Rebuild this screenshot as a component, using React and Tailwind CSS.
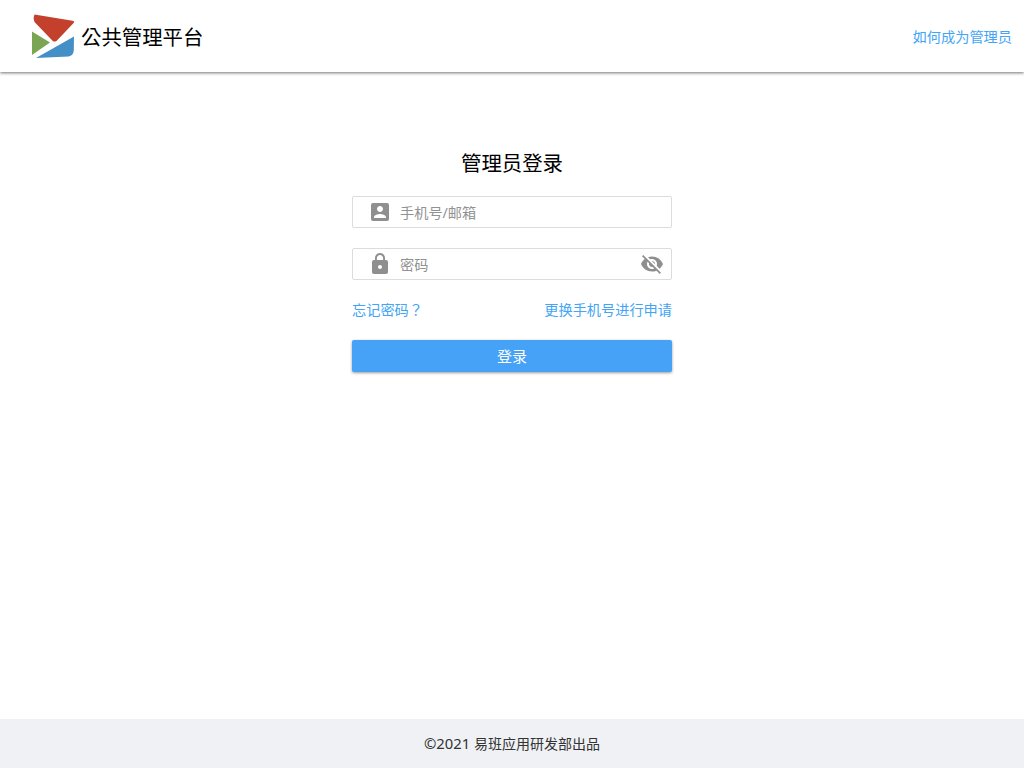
import React from 'react';

function Logo() {
  return (
    <svg width="44" height="46" viewBox="0 0 44 46" className="shrink-0">
      <path d="M3.500 1.800 Q4 1.500 5 1.700 L41.500 7.800 Q43.800 8.400 42.600 10 L25.500 28 Q23.500 29.200 21.800 28 L3.500 9 Q1.800 5 3.500 1.800 Z" fill="#c2402c" />
      <path d="M1 18.500 L19 29.500 L1 42 Z" fill="#7aa653" />
      <path d="M43 23.500 L42.800 37 Q42.500 42.800 37.500 43.400 L5 45 Z" fill="#448fc6" />
    </svg>
  );
}

function UserBox() {
  return (
    <svg width="24" height="24" viewBox="0 0 24 24" fill="#8f8f8f">
      <path d="M3 5v14a2 2 0 0 0 2 2h14a2 2 0 0 0 2-2V5a2 2 0 0 0-2-2H5a2 2 0 0 0-2 2zm12 4c0 1.66-1.34 3-3 3s-3-1.34-3-3 1.34-3 3-3 3 1.34 3 3zm-9 8c0-2 4-3.1 6-3.1s6 1.1 6 3.1v1H6v-1z" />
    </svg>
  );
}

function Lock() {
  return (
    <svg width="24" height="24" viewBox="0 0 24 24" fill="#8f8f8f">
      <path d="M18 8h-1V6c0-2.76-2.24-5-5-5S7 3.24 7 6v2H6c-1.1 0-2 .9-2 2v10c0 1.1.9 2 2 2h12c1.1 0 2-.9 2-2V10c0-1.1-.9-2-2-2zm-6 9c-1.1 0-2-.9-2-2s.9-2 2-2 2 .9 2 2-.9 2-2 2zm3.1-9H8.900V6c0-1.710 1.390-3.100 3.100-3.100s3.100 1.390 3.100 3.100v2z" />
    </svg>
  );
}

function EyeOff() {
  return (
    <svg width="24" height="24" viewBox="0 0 24 24" fill="#8f8f8f">
      <path d="M12 7c2.760 0 5 2.240 5 5 0 .65-.13 1.260-.36 1.830l2.920 2.920c1.510-1.260 2.700-2.890 3.430-4.750-1.730-4.390-6-7.500-11-7.500-1.400 0-2.740.25-3.980.7l2.160 2.160C10.740 7.130 11.350 7 12 7zM2 4.270l2.280 2.280.46.46C3.080 8.300 1.780 10.020 1 12c1.730 4.390 6 7.500 11 7.500 1.550 0 3.030-.3 4.380-.84l.42.42L19.730 22 21 20.730 3.270 3 2 4.270zM7.530 9.800l1.550 1.550c-.05.21-.08.430-.08.650 0 1.660 1.340 3 3 3 .22 0 .44-.03.650-.08l1.550 1.550c-.67.330-1.410.53-2.200.53-2.760 0-5-2.240-5-5 0-.79.200-1.530.530-2.200zm4.310-.78l3.150 3.150.02-.16c0-1.660-1.340-3-3-3l-.17.010z" />
    </svg>
  );
}

export default function App() {
  return (
    <div className="flex flex-col h-[768px] bg-white font-['Noto_Sans','Noto_Sans_CJK_TC',sans-serif] text-[14.2px]">
      <header className="flex items-center justify-between h-[72px] pl-[31px] pr-3 bg-white shadow-[0_1px_3px_rgba(0,0,0,0.55)]">
        <div className="flex items-center">
          <Logo />
          <span className="ml-[6px] pt-[2px] text-[20.4px] text-black">公共管理平台</span>
        </div>
        <a className="pt-[2px] text-[#42a5f5]">如何成为管理员</a>
      </header>

      <main className="flex-1 flex flex-col items-center pt-[76px]">
        <div className="w-[320px]">
          <h1 className="h-[30px] leading-[30px] text-center text-[20.4px] text-black">管理员登录</h1>
          <div className="flex items-center h-8 mt-[18px] pl-[15px] border border-[#dcdcdc] rounded-[2px]">
            <UserBox />
            <span className="ml-2 pt-[2px] text-[#929292]">手机号/邮箱</span>
          </div>
          <div className="flex items-center h-8 mt-5 pl-[15px] pr-[7px] border border-[#dcdcdc] rounded-[2px]">
            <Lock />
            <span className="ml-2 pt-[2px] flex-1 text-[#929292]">密码</span>
            <EyeOff />
          </div>
          <div className="flex justify-between mt-[19px] text-[#42a5f5]">
            <a>忘记密码？</a>
            <a>更换手机号进行申请</a>
          </div>
          <button className="w-full h-8 mt-5 rounded-[2px] bg-[#45a2f6] text-white text-[15px] shadow-[0_1px_3px_rgba(0,0,0,0.4)]">登录</button>
        </div>
      </main>

      <footer className="flex items-center justify-center h-[49px] bg-[#eff1f5] text-[14px] text-[#333333]"><span className="text-[14.8px]">©2021&nbsp;</span>易班应用研发部出品</footer>
    </div>
  );
}
